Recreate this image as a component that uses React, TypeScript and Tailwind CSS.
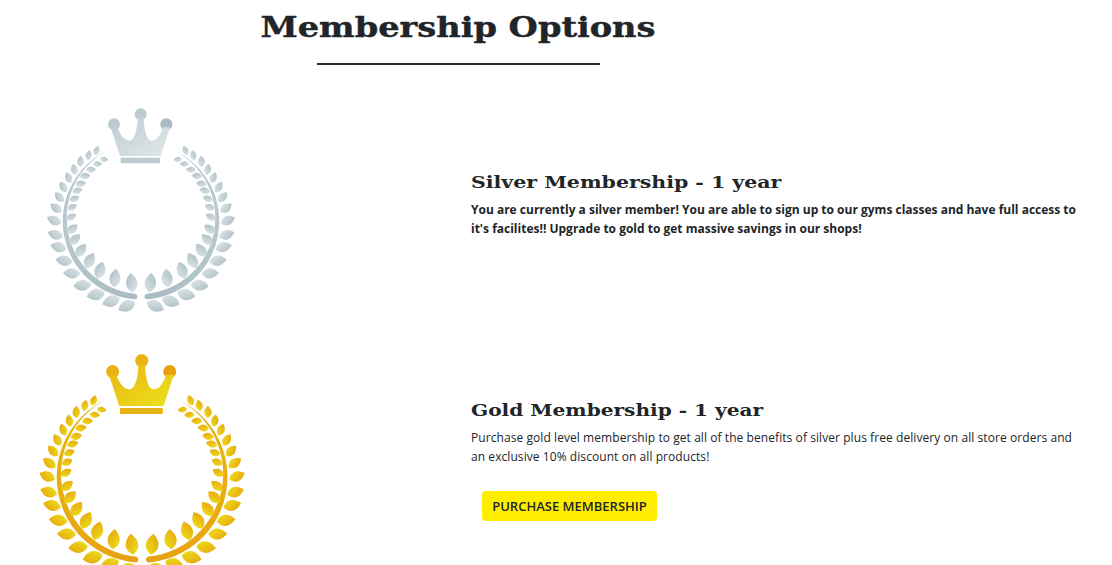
const outer = [
  [200, 152, 30], [176, 166, 31], [152, 184, 34], [133, 208, 34], [116, 233, 35], [100, 261, 37], [88, 291, 39], [78, 324, 42],
  [72, 361, 46], [76, 404, 48], [85, 441, 50], [102, 482, 52], [125, 520, 52], [157, 556, 54], [197, 584, 56], [243, 604, 56], [290, 618, 56],
];
const inner = [
  [222, 178, 26], [203, 192, 28], [183, 209, 30], [165, 228, 32], [152, 251, 32], [142, 272, 32], [133, 296, 32], [127, 322, 32],
  [124, 351, 34], [127, 387, 40], [135, 418, 44], [153, 451, 48], [179, 482, 52], [210, 511, 54], [255, 534, 56], [305, 548, 58],
];

// leaf rotation: tangent of the ring at that point, turned out or in
function leafAngle(x: number, y: number, turn: number) {
  const a = Math.atan2(y - 354, x - 333);
  return (a * 180) / Math.PI + 180 + turn;
}

function outerTurn(i: number) {
  return -35 - 30 * (1 - Math.abs(i - 8) / 8);
}

function innerTurn(i: number) {
  return 40 + (35 * i) / 15;
}

function Leaf({ x, y, len, rot, fill }: { x: number; y: number; len: number; rot: number; fill: string }) {
  const w = len * 0.4;
  return (
    <path
      transform={`translate(${x} ${y}) rotate(${rot}) translate(0 ${len / 2})`}
      d={`M0 0C${w} ${-len * 0.25} ${w} ${-len * 0.65} 0 ${-len}C${-w} ${-len * 0.65} ${-w} ${-len * 0.25} 0 0Z`}
      fill={fill}
    />
  );
}

function Side({ id }: { id: string }) {
  const fill = `url(#${id}-leaf)`;
  return (
    <g>
      <path d="M235 150A235 235 0 0 0 318 598Q327 590 318 582A229 229 0 0 1 235 150Z" fill={`url(#${id}-stem)`} />
      {outer.map(([x, y, l], i) => (
        <Leaf key={i} x={x} y={y} len={l} rot={leafAngle(x, y, outerTurn(i))} fill={fill} />
      ))}
      {inner.map(([x, y, l], i) => (
        <Leaf key={i} x={x} y={y} len={l} rot={leafAngle(x, y, innerTurn(i))} fill={fill} />
      ))}
    </g>
  );
}

function Wreath({ id, from, to, mid, className }: { id: string; from: string; to: string; mid: string; className: string }) {
  return (
    <svg viewBox="0 0 660 660" className={className} aria-hidden="true">
      <defs>
        <linearGradient id={`${id}-leaf`} x1="0" y1="0" x2="1" y2="1">
          <stop offset="0" stopColor={from} />
          <stop offset="1" stopColor={to} />
        </linearGradient>
        <linearGradient id={`${id}-stem`} x1="0" y1="0" x2="1" y2="1">
          <stop offset="0" stopColor={mid} />
          <stop offset="1" stopColor={from} />
        </linearGradient>
        <linearGradient id={`${id}-crown`} x1="0" y1="0" x2="1" y2="1">
          <stop offset="0" stopColor={mid} />
          <stop offset="1" stopColor={to} />
        </linearGradient>
      </defs>
      <Side id={id} />
      <g transform="translate(666 0) scale(-1 1)">
        <Side id={id} />
      </g>
      <circle cx="252" cy="73" r="18" fill={mid} />
      <circle cx="332" cy="43" r="18" fill={mid} />
      <circle cx="409" cy="73" r="18" fill={from} />
      <path
        d="M242 82L262 82C270 106 285 124 300 122C314 118 322 92 323 52L341 52C342 92 350 118 362 122C378 124 392 106 399 82L420 82L392 168H270Z"
        fill={`url(#${id}-crown)`}
      />
      <rect x="272" y="173" width="118" height="17" rx="2" fill={mid} />
    </svg>
  );
}

const heading = { fontFamily: '"DejaVu Serif", serif' };

export default function App() {
  return (
    <div
      className="h-[565px] overflow-hidden bg-white text-[#212529]"
      style={{ fontFamily: '"Open Sans", sans-serif' }}
    >
      <div className="w-[916px] pt-[10px] text-center">
        <h1 className="scale-x-[1.245] text-[27px] leading-[36px] font-bold [-webkit-text-stroke:0.4px_#212529]" style={heading}>
          Membership Options
        </h1>
        <div className="mx-auto mt-[17px] h-[2px] w-[283px] bg-[#2b2b2b]" />
      </div>

      <div className="mt-[35px] flex h-[245px]">
        <div className="w-[471px] shrink-0 pl-[30px]">
          <Wreath id="silver" from="#a9bcc2" to="#e2e8ea" mid="#bccbd0" className="h-[220px] w-[220px]" />
        </div>
        <div className="w-[610px] pt-[72px]">
          <h2 className="origin-left scale-x-[1.28] text-[16px] leading-[22px] font-bold" style={heading}>
            Silver Membership - 1 year
          </h2>
          <p className="mt-[6px] text-[12px] leading-[19px] font-bold">
            You are currently a silver member! You are able to sign up to our gyms classes and have full access to it's
            facilites!! Upgrade to gold to get massive savings in our shops!
          </p>
        </div>
      </div>

      <div className="flex">
        <div className="w-[471px] shrink-0 pl-[21px]">
          <Wreath id="gold" from="#e8a00f" to="#ece31b" mid="#e8b312" className="h-[240px] w-[240px]" />
        </div>
        <div className="w-[610px] pt-[55px]">
          <h2 className="origin-left scale-x-[1.257] text-[16px] leading-[22px] font-bold" style={heading}>
            Gold Membership - 1 year
          </h2>
          <p className="mt-[6px] text-[12px] leading-[19px] tracking-[0.07px]">
            Purchase gold level membership to get all of the benefits of silver plus free delivery on all store orders and
            an exclusive 10% discount on all products!
          </p>
          <button className="mt-[25px] ml-[11px] h-[30px] w-[175px] rounded-[4px] bg-[#ffed00] pt-[2px] text-[13px] font-semibold text-[#212529] uppercase">
            Purchase Membership
          </button>
        </div>
      </div>
    </div>
  );
}
